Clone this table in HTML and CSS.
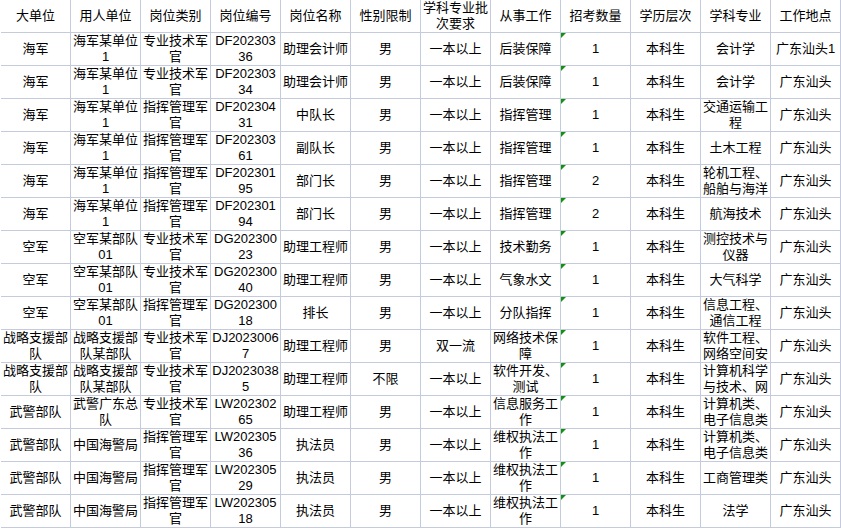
FILE: index.html
```html
<!DOCTYPE html>
<html lang="zh-CN">
<head>
<meta charset="utf-8">
<title>岗位表</title>
<link rel="stylesheet" href="styles.css">
</head>
<body>
<div class="sheet">
  <div class="c">大单位</div><div class="c">用人单位</div><div class="c">岗位类别</div><div class="c">岗位编号</div><div class="c">岗位名称</div><div class="c">性别限制</div><div class="c">学科专业批次要求</div><div class="c">从事工作</div><div class="c">招考数量</div><div class="c">学历层次</div><div class="c">学科专业</div><div class="c">工作地点</div>

  <div class="c">海军</div><div class="c">海军某单位1</div><div class="c">专业技术军官</div><div class="c">DF20230336</div><div class="c">助理会计师</div><div class="c">男</div><div class="c">一本以上</div><div class="c">后装保障</div><div class="c n">1</div><div class="c">本科生</div><div class="c">会计学</div><div class="c">广东汕头1</div>

  <div class="c">海军</div><div class="c">海军某单位1</div><div class="c">专业技术军官</div><div class="c">DF20230334</div><div class="c">助理会计师</div><div class="c">男</div><div class="c">一本以上</div><div class="c">后装保障</div><div class="c n">1</div><div class="c">本科生</div><div class="c">会计学</div><div class="c">广东汕头</div>

  <div class="c">海军</div><div class="c">海军某单位1</div><div class="c">指挥管理军官</div><div class="c">DF20230431</div><div class="c">中队长</div><div class="c">男</div><div class="c">一本以上</div><div class="c">指挥管理</div><div class="c n">1</div><div class="c">本科生</div><div class="c">交通运输工程</div><div class="c">广东汕头</div>

  <div class="c">海军</div><div class="c">海军某单位1</div><div class="c">指挥管理军官</div><div class="c">DF20230361</div><div class="c">副队长</div><div class="c">男</div><div class="c">一本以上</div><div class="c">指挥管理</div><div class="c n">1</div><div class="c">本科生</div><div class="c">土木工程</div><div class="c">广东汕头</div>

  <div class="c">海军</div><div class="c">海军某单位1</div><div class="c">指挥管理军官</div><div class="c">DF20230195</div><div class="c">部门长</div><div class="c">男</div><div class="c">一本以上</div><div class="c">指挥管理</div><div class="c n">2</div><div class="c">本科生</div><div class="c">轮机工程、船舶与海洋</div><div class="c">广东汕头</div>

  <div class="c">海军</div><div class="c">海军某单位1</div><div class="c">指挥管理军官</div><div class="c">DF20230194</div><div class="c">部门长</div><div class="c">男</div><div class="c">一本以上</div><div class="c">指挥管理</div><div class="c n">2</div><div class="c">本科生</div><div class="c">航海技术</div><div class="c">广东汕头</div>

  <div class="c">空军</div><div class="c">空军某部队01</div><div class="c">专业技术军官</div><div class="c">DG20230023</div><div class="c">助理工程师</div><div class="c">男</div><div class="c">一本以上</div><div class="c">技术勤务</div><div class="c n">1</div><div class="c">本科生</div><div class="c">测控技术与仪器</div><div class="c">广东汕头</div>

  <div class="c">空军</div><div class="c">空军某部队01</div><div class="c">专业技术军官</div><div class="c">DG20230040</div><div class="c">助理工程师</div><div class="c">男</div><div class="c">一本以上</div><div class="c">气象水文</div><div class="c n">1</div><div class="c">本科生</div><div class="c">大气科学</div><div class="c">广东汕头</div>

  <div class="c">空军</div><div class="c">空军某部队01</div><div class="c">指挥管理军官</div><div class="c">DG20230018</div><div class="c">排长</div><div class="c">男</div><div class="c">一本以上</div><div class="c">分队指挥</div><div class="c n">1</div><div class="c">本科生</div><div class="c">信息工程、通信工程</div><div class="c">广东汕头</div>

  <div class="c">战略支援部队</div><div class="c">战略支援部队某部队</div><div class="c">专业技术军官</div><div class="c">DJ20230067</div><div class="c">助理工程师</div><div class="c">男</div><div class="c">双一流</div><div class="c">网络技术保障</div><div class="c n">1</div><div class="c">本科生</div><div class="c">软件工程、网络空间安</div><div class="c">广东汕头</div>

  <div class="c">战略支援部队</div><div class="c">战略支援部队某部队</div><div class="c">专业技术军官</div><div class="c">DJ20230385</div><div class="c">助理工程师</div><div class="c">不限</div><div class="c">一本以上</div><div class="c">软件开发、测试</div><div class="c n">1</div><div class="c">本科生</div><div class="c">计算机科学与技术、网</div><div class="c">广东汕头</div>

  <div class="c">武警部队</div><div class="c">武警广东总队</div><div class="c">专业技术军官</div><div class="c">LW20230265</div><div class="c">助理工程师</div><div class="c">男</div><div class="c">一本以上</div><div class="c">信息服务工作</div><div class="c n">1</div><div class="c">本科生</div><div class="c">计算机类、电子信息类</div><div class="c">广东汕头</div>

  <div class="c">武警部队</div><div class="c">中国海警局</div><div class="c">指挥管理军官</div><div class="c">LW20230536</div><div class="c">执法员</div><div class="c">男</div><div class="c">一本以上</div><div class="c">维权执法工作</div><div class="c n">1</div><div class="c">本科生</div><div class="c">计算机类、电子信息类</div><div class="c">广东汕头</div>

  <div class="c">武警部队</div><div class="c">中国海警局</div><div class="c">指挥管理军官</div><div class="c">LW20230529</div><div class="c">执法员</div><div class="c">男</div><div class="c">一本以上</div><div class="c">维权执法工作</div><div class="c n">1</div><div class="c">本科生</div><div class="c">工商管理类</div><div class="c">广东汕头</div>

  <div class="c">武警部队</div><div class="c">中国海警局</div><div class="c">指挥管理军官</div><div class="c">LW20230518</div><div class="c">执法员</div><div class="c">男</div><div class="c">一本以上</div><div class="c">维权执法工作</div><div class="c n">1</div><div class="c">本科生</div><div class="c">法学</div><div class="c">广东汕头</div>
</div>
</body>
</html>
```
FILE: styles.css
```css
html, body {
  margin: 0;
  padding: 0;
  background: #ffffff;
}

.sheet {
  display: grid;
  grid-template-columns: repeat(12, 70px);
  grid-auto-rows: 33px;
  margin-left: 1px;
  font-family: "Liberation Sans", "Noto Sans CJK SC", sans-serif;
  font-size: 13px;
  line-height: 16px;
  color: #000000;
}

.c {
  box-sizing: border-box;
  display: flex;
  align-items: center;
  justify-content: center;
  text-align: center;
  padding: 0 1px;
  overflow: hidden;
  word-break: break-all;
  border-right: 1px solid #c3cbdd;
  border-bottom: 1px solid #c3cbdd;
  position: relative;
}

.n::before {
  content: "";
  position: absolute;
  left: 0;
  top: 0;
  width: 0;
  height: 0;
  border-top: 5px solid #0f930f;
  border-right: 5px solid transparent;
}
```
